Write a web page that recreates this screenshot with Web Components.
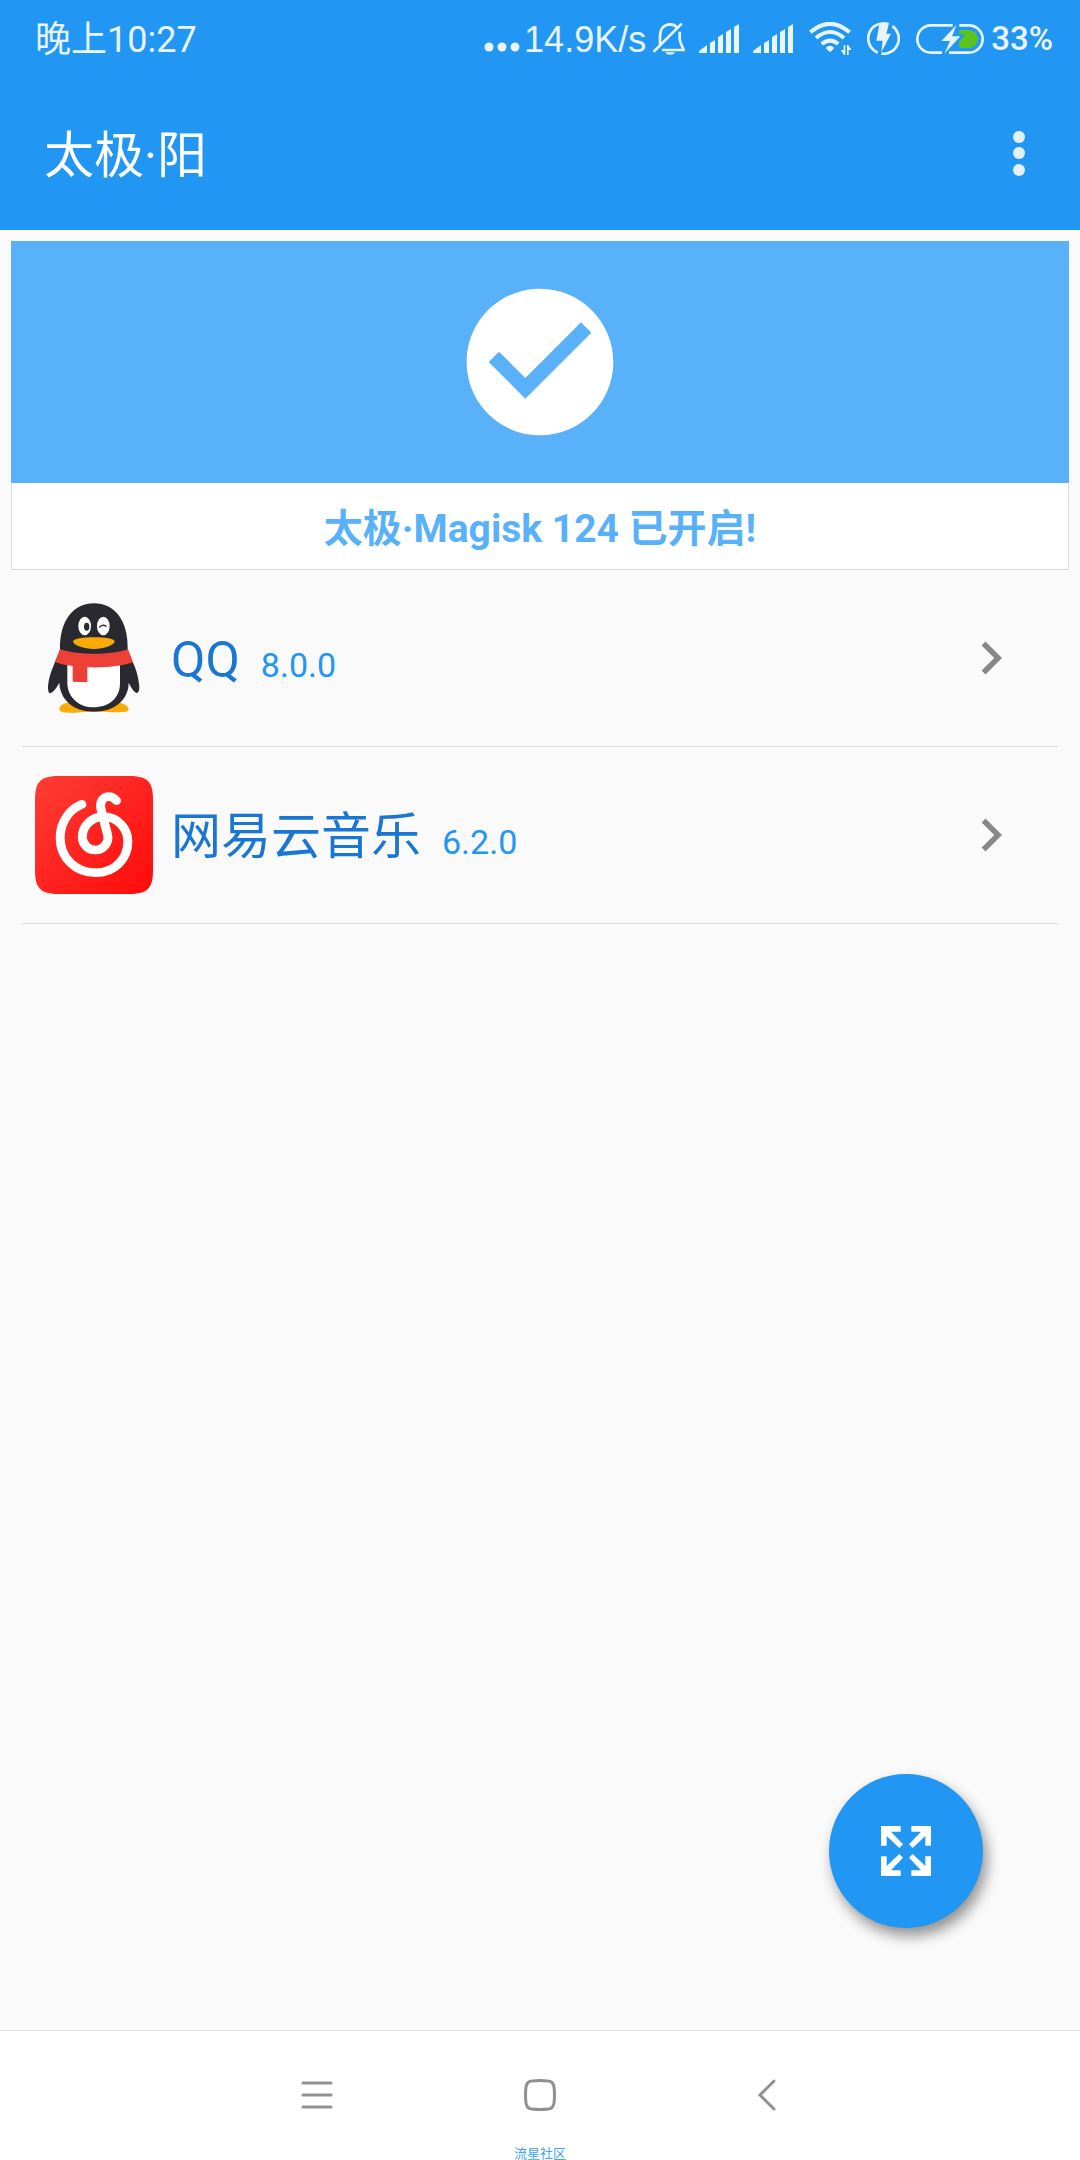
<!DOCTYPE html>
<html lang="zh-CN">
<head>
<meta charset="utf-8">
<meta name="viewport" content="width=device-width,initial-scale=1">
<title>太极·阳</title>
<style>
:root {
    --primary:#2196f3;
    --primary-dark:#1976d2;
    --accent:#59b1f9;
    --line:#dadada;
}
body {
    margin:0;
    background:#fafafa;
    font-family:Roboto,"Noto Sans CJK SC",sans-serif;
}
</style>
</head>
<body>
<app-screen>
    <status-bar slot="top" time="晚上10:27" speed="14.9K/s" battery="33%"></status-bar>
    <tool-bar slot="top">太极·阳</tool-bar>
    <status-card>太极·Magisk 124 已开启!</status-card>
    <app-row version="8.0.0">
        <svg slot="icon" viewBox="105 87 354 354" aria-hidden="true">
            <path fill="#faab07" d="M178 416C180 404 194 398 210 398H354C372 399 386 408 386 418C385 427 366 427 340 427L282 424L224 428C196 428 178 427 178 416Z"/>
            <path fill="#29292f" d="M180 240C178 150 222 100 282 100S386 150 383 240L398 276C410 300 417 330 418 352C418 362 415 369 411 369C403 368 393 352 386 338C386 390 342 425 282 425S180 390 178 338C170 353 159 368 149 370C145 368 144 360 144 350C146 322 156 298 165 276Z"/>
            <path fill="#fff" d="M202 282H360V340C360 386 325 412 281 412S202 382 202 338Z"/>
            <path fill="#ed4037" d="M180 238C238 256 330 256 384 238L399 277C365 289 310 294 262 292V337L218 335V288C198 286 180 282 165 276Z"/>
            <g fill="#fff"><ellipse cx="254" cy="168" rx="19" ry="28"/><ellipse cx="310" cy="168" rx="19" ry="28"/></g>
            <ellipse cx="260" cy="170" rx="8" ry="12" fill="#29292f"/>
            <path d="M299 171Q309 162 318 169" fill="none" stroke="#29292f" stroke-width="4" stroke-linecap="round"/>
            <path fill="#faab07" d="M219 214C222 206 250 202 282 202S342 206 344 214C344 225 312 237 282 237S220 226 219 214Z"/>
        </svg>
        QQ
    </app-row>
    <app-row version="6.2.0">
        <svg slot="icon" viewBox="102 108 342 354" preserveAspectRatio="none" aria-hidden="true">
            <defs><linearGradient id="red" x1="0" y1="0" x2="1" y2="1"><stop stop-color="#ff3d35"/><stop offset="1" stop-color="#ff0a0a"/></linearGradient></defs>
            <path fill="url(#red)" d="M172 108H374C428 108 444 125 444 180V390C444 445 428 462 374 462H172C118 462 102 445 102 390V180C102 125 118 108 172 108Z"/>
            <path fill="none" stroke="#fff" stroke-width="26" stroke-linecap="round" stroke-linejoin="round" d="M238 193C202 208 175 246 175 293C175 352 218 398 277 398C334 398 371 355 371 305C371 262 340 231 300 230C264 231 239 260 239 291C240 314 256 330 277 330C301 330 318 307 312 283L294 210C288 188 296 174 311 170C323 168 331 173 338 182"/>
        </svg>
        网易云音乐
    </app-row>
    <fab-button slot="fab"></fab-button>
    <nav-bar slot="bottom">流星社区</nav-bar>
</app-screen>

<script>
class Base extends HTMLElement {
    constructor() {
        super();
        this.attachShadow({ mode: 'open' }).innerHTML = this.render();
    }
    render() { return ''; }
}

customElements.define('app-screen', class extends Base {
    render() {
        return `
        <style>
        :host {
            display:flex;flex-direction:column;
            min-height:100vh;
        }
        header {
            background:var(--primary);
            color:white;
        }
        main {
            flex:1;
            padding:11px 11px 0;
        }
        .fab {
            display:flex;justify-content:flex-end;
            padding:0 97px 102px;
        }
        </style>
        <header><slot name="top"></slot></header>
        <main><slot></slot></main>
        <div class="fab"><slot name="fab"></slot></div>
        <slot name="bottom"></slot>`;
    }
});

customElements.define('status-bar', class extends Base {
    render() {
        const signal = `<svg width="40" height="30" viewBox="0 0 40 30"><path d="M0 29V27L8 21V29ZM11 29V19L16 16V29ZM19 29V13L24 10V29ZM27 29V8L32 5V29ZM35 29V3L40 0V29Z"/></svg>`;
        return `
        <style>
        :host {
            display:flex;align-items:center;justify-content:space-between;
            height:77px;padding:0 27px 0 35px;box-sizing:border-box;
            color:#e8f4fe;
            font-size:36px;line-height:40px;
        }
        .time,.speed {
            padding-top:3px;
        }
        .right,.net,.signals,.power {
            display:flex;align-items:center;
        }
        .right {
            gap:16px;
        }
        .signals {
            gap:14px;
        }
        .net,.power {
            gap:7px;
        }
        .speed {
            display:flex;align-items:center;gap:4px;
            font-family:"Liberation Sans",sans-serif;
        }
        .level {
            font-size:33px;font-weight:500;
        }
        svg {
            display:block;
            fill:currentColor;
        }
        .line {
            fill:none;stroke:currentColor;stroke-width:8;
        }
        .wave {
            fill:none;stroke:currentColor;stroke-width:12;
        }
        </style>
        <span class="time">${this.getAttribute('time')}</span>
        <div class="right">
            <div class="signals">
                <div class="net">
                    <span class="speed">
                        <svg width="36" height="28" viewBox="0 0 36 28"><circle cx="5" cy="21" r="4.5"/><circle cx="18" cy="21" r="4.5"/><circle cx="31" cy="21" r="4.5"/></svg>
                        ${this.getAttribute('speed')}
                    </span>
                    <!-- silent -->
                    <svg width="32" height="32" viewBox="0 0 96 96">
                        <path class="line" stroke-linecap="round" d="M4 84L84 4"/>
                        <path class="line" d="M21 64V42C21 16 34 4 51 4C60 4 67 7 72 13M80 26V48C81 60 88 70 92 81H27"/>
                        <path d="M37 88H66C62 98 41 98 37 88Z"/>
                    </svg>
                </div>
                ${signal}
                ${signal}
            </div>
            <!-- wifi -->
            <svg width="42" height="33" viewBox="0 0 126 99">
                <path class="wave" d="M4 31Q63 -20 122 31M21 48Q63 12 105 48M38 66Q63 46 88 66"/>
                <path d="M50 77Q63 66 76 77L68 87Q63 92 58 87Z"/>
                <path d="M104 69H109V99H104V97L95 84H104ZM114 69H119V71L128 84H119V99H114Z"/>
            </svg>
            <!-- fast charge -->
            <svg width="33" height="33" viewBox="0 0 99 99">
                <path class="line" d="M38 5A46 46 0 0 0 32 92M76 12A46 46 0 0 1 43 95"/>
                <path d="M38 2Q52 -2 66 3L58 35H72L43 91L47 56H28Z"/>
            </svg>
            <div class="power">
                <svg width="68" height="30" viewBox="0 0 204 90">
                    <path class="line" d="M110 4H45A41 41 0 0 0 45 86H78M130 4H159A41 41 0 0 1 159 86H99"/>
                    <path d="M122 2L76 51H102L85 89L133 37H108Z"/>
                    <path fill="#5ac41a" d="M129 22Q129 18 134 18H159A27 27 0 0 1 159 72H136Q129 72 129 66V54L148 31H129Z"/>
                </svg>
                <span class="level">${this.getAttribute('battery')}</span>
            </div>
        </div>`;
    }
});

customElements.define('tool-bar', class extends Base {
    render() {
        return `
        <style>
        :host {
            display:flex;align-items:center;justify-content:space-between;
            height:153px;padding:0 28px 0 44px;
        }
        h1 {
            margin:0;padding-top:4px;
            font-size:50px;line-height:66px;font-weight:400;
        }
        button {
            width:66px;height:66px;padding:0;
            border:0;background:none;
        }
        svg {
            display:block;
            fill:#e4f0fd;
        }
        </style>
        <h1><slot></slot></h1>
        <button aria-label="更多">
            <svg width="66" height="66" viewBox="0 0 66 66"><circle cx="33" cy="16" r="6"/><circle cx="33" cy="32" r="6"/><circle cx="33" cy="49" r="6"/></svg>
        </button>`;
    }
});

customElements.define('status-card', class extends Base {
    render() {
        return `
        <style>
        :host {
            display:block;
            background:white;
            text-align:center;
        }
        .state {
            display:flex;justify-content:center;
            padding:33px 0;
            background:var(--accent);
        }
        p {
            margin:0;padding:24px 0 17px;
            border:1px solid var(--line);border-top:0;
            color:var(--accent);
            font-size:39px;line-height:45px;font-weight:700;
        }
        </style>
        <div class="state">
            <svg width="176" height="176" viewBox="0 0 24 24" fill="white"><path d="M12 2C6.48 2 2 6.48 2 12s4.48 10 10 10 10-4.48 10-10S17.52 2 12 2zm-2 15l-5-5 1.41-1.41L10 14.17l7.59-7.59L19 8l-9 9z"/></svg>
        </div>
        <p><slot></slot></p>`;
    }
});

customElements.define('app-row', class extends Base {
    render() {
        return `
        <style>
        :host {
            display:block;
            margin:0 11px;
            border-bottom:1px solid var(--line);
        }
        a {
            display:flex;align-items:center;
            padding:29px 34px 29px 13px;
            color:var(--primary-dark);
            text-decoration:none;
        }
        ::slotted(svg) {
            display:block;
            width:118px;height:118px;
        }
        .text {
            flex:1;
            display:flex;align-items:baseline;gap:21px;
            padding:8px 0 0 18px;
            font-size:50px;line-height:66px;
        }
        small {
            color:var(--primary);
            font-size:34px;
        }
        </style>
        <a href="#">
            <slot name="icon"></slot>
            <span class="text"><span><slot></slot></span><small>${this.getAttribute('version')}</small></span>
            <svg width="66" height="66" viewBox="0 0 24 24" fill="#888"><path d="M10 6L8.59 7.41 13.17 12l-4.58 4.59L10 18l6-6z"/></svg>
        </a>`;
    }
});

customElements.define('fab-button', class extends Base {
    render() {
        const arrow = 'M0 0H59V17H30L66 55L55 66L17 30V59H0Z';
        return `
        <style>
        :host {
            display:block;
        }
        button {
            display:grid;place-items:center;
            width:154px;height:154px;padding:0;
            border:0;border-radius:50%;
            background:var(--primary);
            box-shadow:4px 8px 14px rgba(0,0,0,.42);
        }
        </style>
        <button aria-label="全屏">
            <svg width="50" height="50" viewBox="0 0 150 150" fill="white">
                ${[0, 90, 180, 270].map(r => `<path d="${arrow}" transform="rotate(${r} 75 75)"/>`).join('')}
            </svg>
        </button>`;
    }
});

customElements.define('nav-bar', class extends Base {
    render() {
        return `
        <style>
        :host {
            display:block;
            border-top:1px solid #e3e3e3;
            background:white;
            text-align:center;
        }
        nav {
            display:grid;grid-template-columns:repeat(3,1fr);justify-items:center;
            width:62%;margin:auto;padding:48px 0 36px;
        }
        button {
            padding:0;
            border:0;background:none;
        }
        svg {
            display:block;
            fill:none;stroke:#909090;stroke-width:3;stroke-linecap:round;
        }
        small {
            display:block;
            color:#42a5f5;
            font-size:13px;line-height:13px;
        }
        </style>
        <nav>
            <button aria-label="菜单"><svg width="32" height="32" viewBox="0 0 32 32"><path d="M2 4H30M2 16H30M2 28H30"/></svg></button>
            <button aria-label="主页"><svg width="32" height="32" viewBox="0 0 32 32"><path d="M8 2Q16 1 24 2Q29 2 30 8Q31 16 30 24Q29 30 24 30Q16 31 8 30Q3 30 2 24Q1 16 2 8Q3 2 8 2Z"/></svg></button>
            <button aria-label="返回"><svg width="32" height="32" viewBox="0 0 32 32"><path d="M27 2L13 16L27 30"/></svg></button>
        </nav>
        <small><slot></slot></small>`;
    }
});
</script>
</body>
</html>
